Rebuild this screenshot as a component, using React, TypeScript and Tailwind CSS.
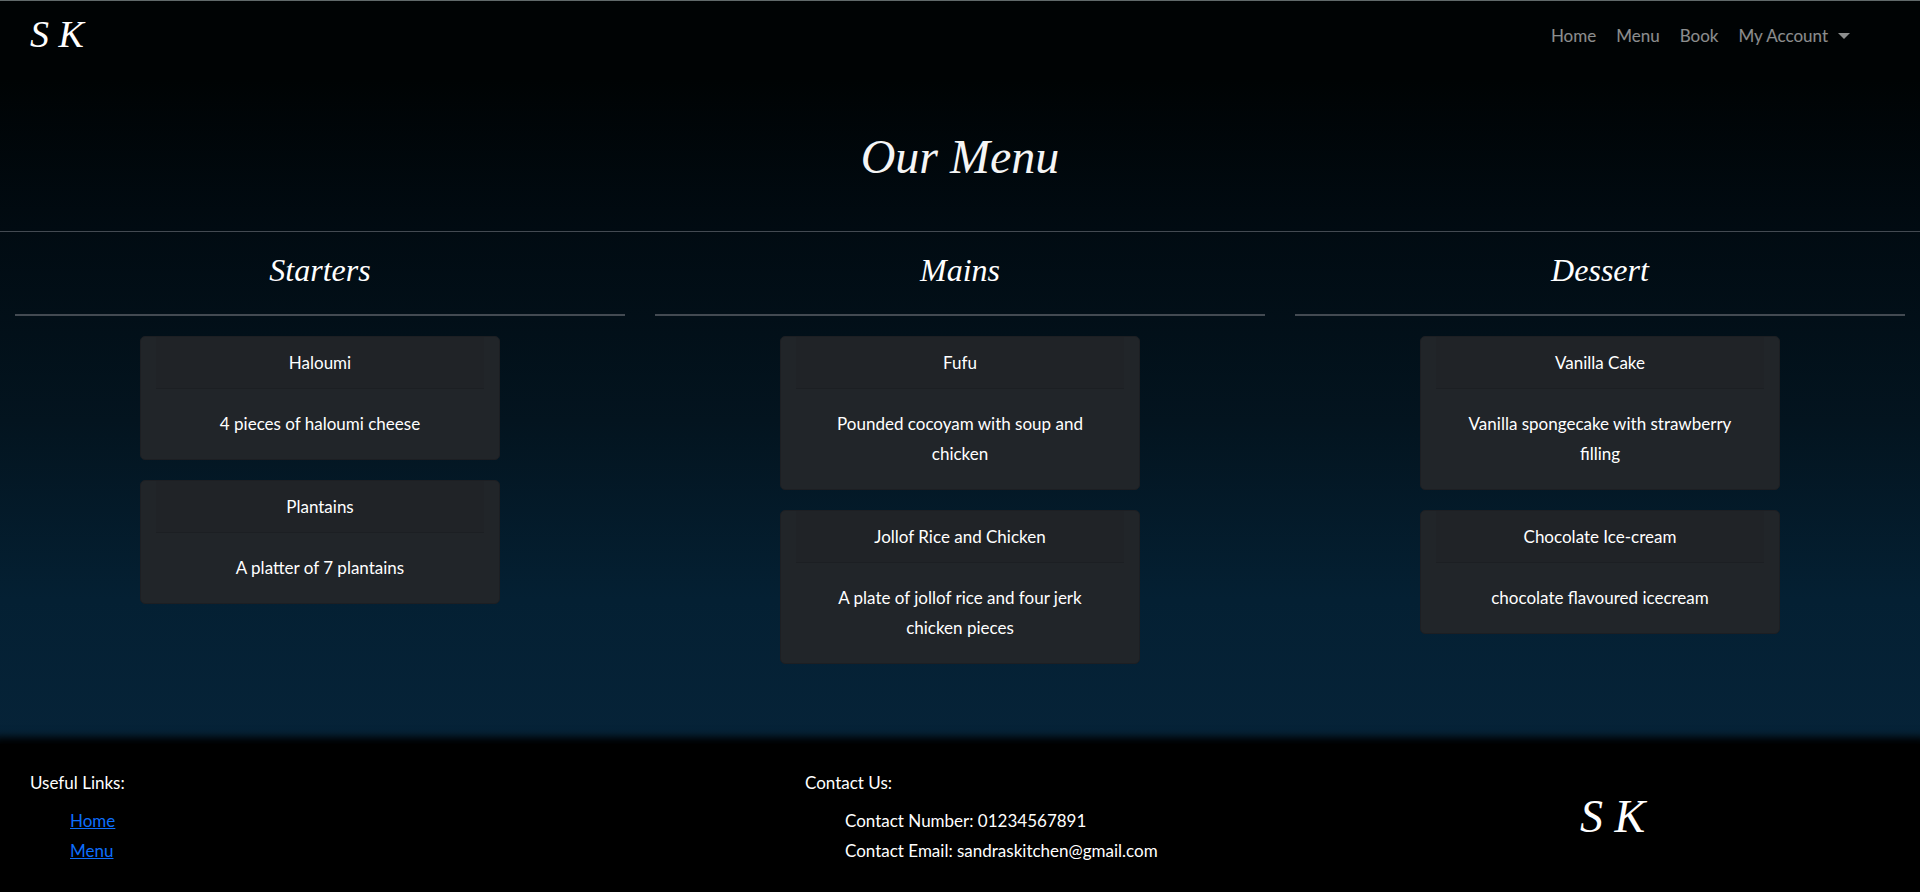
const scriptFont = "font-['Liberation_Serif',serif] italic";

type Dish = { name: string; description: string };
type Course = { title: string; dishes: Dish[] };

const courses: Course[] = [
  {
    title: 'Starters',
    dishes: [
      { name: 'Haloumi', description: '4 pieces of haloumi cheese' },
      { name: 'Plantains', description: 'A platter of 7 plantains' },
    ],
  },
  {
    title: 'Mains',
    dishes: [
      { name: 'Fufu', description: 'Pounded cocoyam with soup and chicken' },
      { name: 'Jollof Rice and Chicken', description: 'A plate of jollof rice and four jerk chicken pieces' },
    ],
  },
  {
    title: 'Dessert',
    dishes: [
      { name: 'Vanilla Cake', description: 'Vanilla spongecake with strawberry filling' },
      { name: 'Chocolate Ice-cream', description: 'chocolate flavoured icecream' },
    ],
  },
];

function Navbar() {
  return (
    <nav className="flex items-start justify-between border-t border-[#60696a] pt-3 pr-[70px] pl-[30px] text-white">
      <a href="#home" className={`${scriptFont} text-[38px] leading-[42px]`}>
        S K
      </a>
      <ul className="flex gap-5 pt-2 text-white/55">
        <li><a href="#home">Home</a></li>
        <li><a href="#menu">Menu</a></li>
        <li><a href="#book">Book</a></li>
        <li>
          <button type="button" className="flex items-center gap-2.5">
            My Account
            <span className="border-x-[6px] border-t-[6px] border-x-transparent border-t-current" />
          </button>
        </li>
      </ul>
    </nav>
  );
}

function DishCard({ name, description }: Dish) {
  return (
    <article className="rounded-[5px] border border-[#1d1f23] bg-[#212529] px-[15px] text-center">
      <h3 className="border-b border-[#1c1f23] bg-[#202327] pt-[11px] pb-2.5">{name}</h3>
      <p className="p-5">{description}</p>
    </article>
  );
}

function CourseColumn({ title, dishes }: Course) {
  return (
    <section className="px-[15px]">
      <h2 className={`${scriptFont} border-b-2 border-[#434a52] pt-4 pb-[22px] text-center text-[32px] leading-[44px] font-medium`}>
        {title}
      </h2>
      <div className="mx-auto flex w-[360px] flex-col gap-5 pt-5">
        {dishes.map((dish) => (
          <DishCard key={dish.name} {...dish} />
        ))}
      </div>
    </section>
  );
}

function Footer() {
  return (
    <footer className="grid grid-cols-[5fr_5fr_2fr] bg-black px-[30px] pt-6 pb-[26px] shadow-[0_0_8px_7px_#000]">
      <div>
        <p>Useful Links:</p>
        <ul className="pt-2 pl-10 text-[#0d6efd]">
          <li><a href="#home" className="underline">Home</a></li>
          <li><a href="#menu" className="underline">Menu</a></li>
        </ul>
      </div>
      <div>
        <p>Contact Us:</p>
        <ul className="pt-2 pl-10">
          <li>Contact Number: 01234567891</li>
          <li>Contact Email: sandraskitchen@gmail.com</li>
        </ul>
      </div>
      <p className={`${scriptFont} self-center text-[46px] leading-[50px]`}>S K</p>
    </footer>
  );
}

export default function App() {
  return (
    <div className="flex min-h-screen flex-col bg-[linear-gradient(#000304_0px,#000304_80px,#010b12_230px,#03141f_420px,#042033_600px,#062338_740px)] font-['Lato','Liberation_Sans',sans-serif] text-[17px] leading-[30px] text-white">
      <Navbar />
      <main className="grow">
        <h1 className={`${scriptFont} border-b border-[#434a52] pt-[72px] pb-11 text-center text-[48px] leading-[60px] font-medium text-[#f5f5f5]`}>
          Our Menu
        </h1>
        <div className="grid grid-cols-3">
          {courses.map((course) => (
            <CourseColumn key={course.title} {...course} />
          ))}
        </div>
      </main>
      <Footer />
    </div>
  );
}
